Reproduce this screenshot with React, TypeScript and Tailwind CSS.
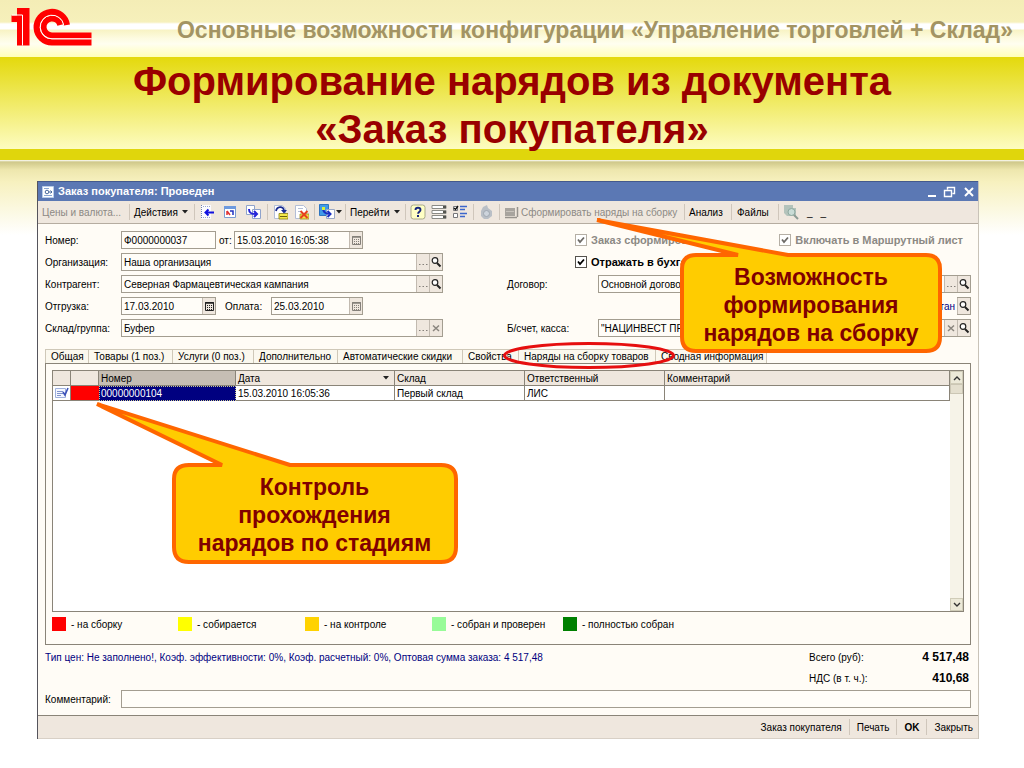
import type { ReactNode } from "react"
import clsx from "clsx"

function Logo() {
  return (
    <svg viewBox="10 6 84 42" className="w-[84px] h-[42px]" aria-label="1С" fill="none">
      <path d="M17 8H29.5V45.5H17V22H11.5V15.5H17Z" fill="#f00" />
      <path d="M12 15H22.5V45.5" stroke="#fff" strokeWidth="1" />
      <path d="M66.9 25A15.2 15.2 0 1 0 52 42.3H91.5" stroke="#f00" strokeWidth="6.2" />
      <path d="M60.3 25A8.5 8.5 0 1 0 52 35.4H91.5" stroke="#f00" strokeWidth="6" />
      <path d="M63.7 25A11.8 11.8 0 1 0 52 38.8H91.5" stroke="#fff" strokeWidth="1" />
    </svg>
  )
}

function Icon({ children }: { children: ReactNode }) {
  return (
    <svg viewBox="0 0 16 16" className="size-4 shrink-0" fill="none" aria-hidden="true">
      {children}
    </svg>
  )
}

function DocIcon() {
  return (
    <svg viewBox="0 0 12 12" className="size-3" fill="none" aria-hidden="true">
      <path d="M.5 .5H11.500V11.500H.5Z" fill="#fff" stroke="#b9cdea" />
      <path d="M2 2.500h5M2 9.500h8" stroke="#8aa6d2" />
      <circle cx="5" cy="6" r="1.800" stroke="#4a6a9c" />
      <path d="M7 6h3M8.500 4.500L10 6L8.500 7.500" stroke="#4a6a9c" />
    </svg>
  )
}

const page = <path d="M2.5 1.5H10.5L13.5 4.5V14.5H2.5Z" fill="#fff" stroke="#b3bed6" />

function AddIcon() {
  return (
    <Icon>
      <path d="M2 1H12V15H2Z" fill="#fbfbff" />
      <path d="M2.5 1v14" stroke="#6f7fb0" strokeDasharray="1 1" />
      <path d="M4 2.5h8M4 13.5h8" stroke="#9aa6c8" strokeDasharray="1 1" />
      <path d="M7 8.5H15M9.5 5.5L6.5 8.5L9.5 11.5" stroke="#1010e0" strokeWidth="2" />
    </Icon>
  )
}

function RefreshIcon() {
  return (
    <Icon>
      <path d="M2.5 2.5h11v11h-11z" fill="#fff" stroke="#7a9bd0" />
      <path d="M2 2h12v3H2z" fill="#6f9ade" />
      <path d="M5 11V7M5 7l3 4" stroke="#e03030" strokeWidth="1.5" />
      <path d="M8 7h3v4" stroke="#2030c0" strokeWidth="1.5" />
    </Icon>
  )
}

function CopyIcon() {
  return (
    <Icon>
      <path d="M1.5 1.5h8v9h-8z" fill="#fff" stroke="#8fa3cc" />
      <path d="M7.5 5.5h8v9h-8z" fill="#fff" stroke="#8fa3cc" />
      <path d="M4 5c0 4 2 5 7 5M9 7l3 3-3 3" stroke="#2424d8" strokeWidth="2" />
    </Icon>
  )
}

function PostIcon() {
  return (
    <Icon>
      {page}
      <path d="M7 9.5h9V15H7z" fill="#f5e94a" stroke="#8a7d10" strokeWidth=".8" />
      <path d="M8 12.5h7" stroke="#6c6210" />
      <path d="M4 7C5 2 11 2 12 6" stroke="#1a2a90" strokeWidth="1.8" />
      <path d="M9 6h6l-3 3.500z" fill="#1a2a90" />
    </Icon>
  )
}

function UnpostIcon() {
  return (
    <Icon>
      {page}
      <path d="M5 4.5h5M5 7.5h4" stroke="#b3bed6" />
      <path d="M7 10h9v5H7z" fill="#f5e04a" stroke="#9a8d20" strokeWidth=".8" />
      <path d="M7.5 7l7 7M14.5 7l-7 7" stroke="#e8401c" strokeWidth="2" />
    </Icon>
  )
}

function EnterBasedIcon() {
  return (
    <Icon>
      <path d="M.5.5h9v11h-9z" fill="#3f9be8" stroke="#2e75c0" />
      <path d="M7.5 5.5h8v9h-8z" fill="#fff" stroke="#9aa9c6" />
      <path d="M4 4c0 4 2 6 7 6M8.5 7l3 3-3 3" stroke="#1a2fc0" strokeWidth="2" />
      <path d="M3 3h3v3H3z" fill="#d8f03c" />
    </Icon>
  )
}

function HelpIcon() {
  return (
    <Icon>
      <rect x="1" y="1" width="14" height="14" rx="2.5" fill="#ffffc4" stroke="#a9a98c" />
      <path d="M5.5 6c0-3 5-3 5 0 0 1.8-2.4 1.7-2.4 3.800" stroke="#16247e" strokeWidth="1.9" />
      <path d="M7 11h2v2H7z" fill="#16247e" />
    </Icon>
  )
}

function ListIcon() {
  return (
    <Icon>
      <path d="M1 1.5h14v3H1zM1 6.5h14v3H1zM1 11.5h14v3H1z" fill="#fff" stroke="#8b8b86" />
      <path d="M12 2h3v2h-3zM12 7h3v2h-3zM12 12h3v2h-3z" fill="#55554f" />
    </Icon>
  )
}

function ChecksIcon() {
  return (
    <Icon>
      <path d="M1.5 2.5h4v4h-4zM1.5 9.5h4v4h-4z" fill="#fff" stroke="#77777a" />
      <path d="M2 4l1.5 1.500L6 2" stroke="#111" strokeWidth="1.4" />
      <path d="M8 2.500h7M8 5.500h5M8 9.500h7M8 12.500h5" stroke="#3c66cc" strokeWidth="1.5" />
    </Icon>
  )
}

function ClockIcon() {
  return (
    <Icon>
      <path d="M5 3l4-2 1 3 4 3v5l-4 3H6l-3-3V7z" fill="#b9bfc6" />
      <circle cx="8.500" cy="9.500" r="3" fill="#cdd4dc" stroke="#9fa7b0" />
    </Icon>
  )
}

function OrderIcon() {
  return (
    <Icon>
      <path d="M1 4h10v8H1z" fill="#a8a49e" />
      <path d="M1 13.500h12M13.500 3v10" stroke="#97938d" strokeWidth="1.500" />
      <path d="M2 7.500h8" stroke="#c8c3bc" />
    </Icon>
  )
}

function SearchDocIcon() {
  return (
    <Icon>
      <path d="M1 1h9v3h3v8H4L1 9z" fill="#b4c3bb" />
      <circle cx="8.5" cy="8" r="3.5" fill="#c9dcd6" stroke="#8fa9a0" />
      <path d="M11 11l4 4" stroke="#8c9b94" strokeWidth="2" />
    </Icon>
  )
}

function Caret() {
  return (
    <svg viewBox="0 0 6 4" className="w-[6px] h-1 shrink-0" aria-hidden="true">
      <path d="M0 0h6L3 3.500z" fill="#222" />
    </svg>
  )
}

function Separator() {
  return <span className="w-px h-4 shrink-0 bg-[#cfc6bb]" />
}

function ToolGroup({ width, children }: { width: string; children: ReactNode }) {
  return <div className={clsx("flex items-center shrink-0 h-full", width)}>{children}</div>
}

function Toolbar() {
  return (
    <div className="flex items-center h-[23px] bg-[#efe7de] border-b border-[#b5aca0] overflow-hidden whitespace-nowrap">
      <ToolGroup width="w-[91px] pl-1">
        <button className="text-[#8c8984]" disabled>Цены и валюта...</button>
      </ToolGroup>
      <Separator />
      <ToolGroup width="w-16 pl-1">
        <button className="flex items-center gap-1">Действия <Caret /></button>
      </ToolGroup>
      <Separator />
      <ToolGroup width="w-[72px] pl-1 gap-[7px]">
        <button aria-label="Добавить"><AddIcon /></button>
        <button aria-label="Обновить"><RefreshIcon /></button>
        <button aria-label="Скопировать"><CopyIcon /></button>
      </ToolGroup>
      <Separator />
      <ToolGroup width="w-[46px] pl-1 gap-[5px]">
        <button aria-label="Провести"><PostIcon /></button>
        <button aria-label="Отмена проведения"><UnpostIcon /></button>
      </ToolGroup>
      <Separator />
      <ToolGroup width="w-[30px] pl-1">
        <button className="flex items-center gap-px" aria-label="Ввести на основании"><EnterBasedIcon /><Caret /></button>
      </ToolGroup>
      <Separator />
      <ToolGroup width="w-[59px] pl-1">
        <button className="flex items-center gap-1">Перейти <Caret /></button>
      </ToolGroup>
      <Separator />
      <ToolGroup width="w-[67px] pl-1 gap-[5px]">
        <button aria-label="Справка"><HelpIcon /></button>
        <button aria-label="Список"><ListIcon /></button>
        <button aria-label="Настройка"><ChecksIcon /></button>
      </ToolGroup>
      <Separator />
      <ToolGroup width="w-[25px] pl-1">
        <button aria-label="История" disabled><ClockIcon /></button>
      </ToolGroup>
      <Separator />
      <ToolGroup width="w-[184px] pl-1">
        <button className="flex items-center gap-px text-[#8c8984]" disabled><OrderIcon /> Сформировать наряды на сборку</button>
      </ToolGroup>
      <Separator />
      <ToolGroup width="w-[46px] pl-1"><button>Анализ</button></ToolGroup>
      <Separator />
      <ToolGroup width="w-[46px] pl-[5px]"><button>Файлы</button></ToolGroup>
      <Separator />
      <ToolGroup width="w-16 pl-1 gap-2">
        <button aria-label="Найти" disabled><SearchDocIcon /></button>
        <span>_</span>
        <span>_</span>
      </ToolGroup>
    </div>
  )
}

type Action = "dots" | "search" | "clear" | "calendar" | "calendarOff"

const actionLabels: Record<Action, string> = {
  dots: "Выбрать",
  search: "Открыть",
  clear: "Очистить",
  calendar: "Календарь",
  calendarOff: "Календарь",
}

function ActionButton({ action }: { action: Action }) {
  return (
    <button
      aria-label={actionLabels[action]}
      className="flex items-center justify-center w-[13px] h-4 shrink-0 bg-[#efe7de] border-l border-[#c2bab0]"
    >
      <svg viewBox="0 0 12 16" className="w-3 h-4" fill="none" aria-hidden="true">
        {action === "dots" && <path d="M2 10.500h1.500M5.500 10.500H7M9 10.500h1.500" stroke="#85807a" />}
        {action === "clear" && <path d="M3 5.500l6 5.500M9 5.500L3 11" stroke="#8a857e" strokeWidth="1.5" />}
        {action === "search" && (
          <>
            <circle cx="5" cy="6.500" r="2.800" fill="#fff" stroke="#222" strokeWidth="1.2" />
            <path d="M7 9l3.500 3.500" stroke="#222" strokeWidth="2" />
          </>
        )}
        {(action === "calendar" || action === "calendarOff") && (
          <g stroke={action === "calendar" ? "#222" : "#85807a"}>
            <path d="M2.5 4.5h8v8h-8z" />
            <path d="M2 5h9" strokeWidth="1.5" />
            <path d="M4 7.5h6M4 9.5h6M4 11.5h6" strokeDasharray="1 1" />
          </g>
        )}
      </svg>
    </button>
  )
}

type FieldProps = { id: string; value: string; width: string; actions?: Action[] }

function Field({ id, value, width, actions = [] }: FieldProps) {
  return (
    <div className={clsx("flex items-center h-[18px] border border-[#a39d90] bg-[#fffdf8]", width)}>
      <input id={id} defaultValue={value} className="flex-1 min-w-0 h-4 px-[2px] outline-none" />
      {actions.map((action) => (
        <ActionButton key={action} action={action} />
      ))}
    </div>
  )
}

function Check({ label, muted }: { label: string; muted?: boolean }) {
  return (
    <label className={clsx("flex items-center gap-1 text-[11px] font-bold whitespace-nowrap", muted && "text-[#8c8984]")}>
      <span className="grid size-3 shrink-0">
        <input
          type="checkbox"
          defaultChecked
          disabled={muted}
          className={clsx("appearance-none size-3 border bg-white col-start-1 row-start-1", muted ? "border-[#b5afa5]" : "border-[#55524d]")}
        />
        <svg viewBox="0 0 12 12" className="size-3 col-start-1 row-start-1 pointer-events-none" fill="none">
          <path d="M3 5.5L5 8L9 3.5" stroke={muted ? "#6d6a66" : "#000"} strokeWidth="1.8" />
        </svg>
      </span>
      {label}
    </label>
  )
}

function OrderForm() {
  return (
    <div className="grid grid-cols-[398px_1fr] gap-x-16">
      <div className="grid auto-rows-[18px] gap-1">
        <div className="flex items-center">
          <label htmlFor="number" className="w-[76px]">Номер:</label>
          <Field id="number" value="Ф0000000037" width="w-[95px]" />
          <label htmlFor="date" className="w-[18px] pl-[3px]">от:</label>
          <Field id="date" value="15.03.2010 16:05:38" width="w-[129px]" actions={["calendarOff"]} />
        </div>
        <div className="flex items-center">
          <label htmlFor="org" className="w-[76px]">Организация:</label>
          <Field id="org" value="Наша организация" width="flex-1" actions={["dots", "search"]} />
        </div>
        <div className="flex items-center">
          <label htmlFor="client" className="w-[76px]">Контрагент:</label>
          <Field id="client" value="Северная Фармацевтическая кампания" width="flex-1" actions={["dots", "search"]} />
        </div>
        <div className="flex items-center">
          <label htmlFor="ship" className="w-[76px]">Отгрузка:</label>
          <Field id="ship" value="17.03.2010" width="w-[95px]" actions={["calendar"]} />
          <label htmlFor="pay" className="w-[55px] pl-[9px]">Оплата:</label>
          <Field id="pay" value="25.03.2010" width="w-[92px]" actions={["calendarOff"]} />
        </div>
        <div className="flex items-center">
          <label htmlFor="stock" className="w-[76px]">Склад/группа:</label>
          <Field id="stock" value="Буфер" width="flex-1" actions={["dots", "clear"]} />
        </div>
      </div>
      <div className="grid auto-rows-[18px] gap-1">
        <div className="flex items-center pl-[68px] pr-2 justify-between">
          <Check label="Заказ сформирован" muted />
          <Check label="Включать в Маршрутный лист" muted />
        </div>
        <div className="flex items-center pl-[68px]">
          <Check label="Отражать в бухгалтерии" />
        </div>
        <div className="flex items-center">
          <label htmlFor="contract" className="w-[91px]">Договор:</label>
          <Field id="contract" value="Основной договор" width="flex-1" actions={["dots", "search"]} />
        </div>
        <div className="flex items-center justify-end gap-[2px] text-[#000080]">
          <span>рассчитан</span>
          <span className="flex border border-l-0 border-[#a39d90]"><ActionButton action="search" /></span>
        </div>
        <div className="flex items-center">
          <label htmlFor="account" className="w-[91px]">Б/счет, касса:</label>
          <Field id="account" value={'"НАЦИНВЕСТ ПРОМБАНК"'} width="flex-1" actions={["clear", "search"]} />
        </div>
      </div>
    </div>
  )
}

const tabs = [
  { title: "Общая", width: "w-[43px]" },
  { title: "Товары (1 поз.)", width: "w-[84px]" },
  { title: "Услуги (0 поз.)", width: "w-[81px]" },
  { title: "Дополнительно", width: "w-[84px]" },
  { title: "Автоматические скидки", width: "w-[125px]" },
  { title: "Свойства", width: "w-[56px]" },
  { title: "Наряды на сборку товаров", width: "w-[137px]" },
  { title: "Сводная информация", width: "w-[111px]" },
]

const legend = [
  { color: "bg-[#ff0000]", text: "- на сборку" },
  { color: "bg-[#ffff00]", text: "- собирается" },
  { color: "bg-[#ffd200]", text: "- на контроле" },
  { color: "bg-[#98fb98]", text: "- собран и проверен" },
  { color: "bg-[#008000]", text: "- полностью собран" },
]

function TaskTable() {
  const head = "border-r border-b border-[#8a8478] pl-[2px] font-normal text-left"
  const cell = "border-r border-b border-[#8a8478] pl-[2px]"
  return (
    <div className="flex h-[242px] border border-[#8a8478] bg-white">
      <div className="flex-1">
        <table className="w-full table-fixed border-separate border-spacing-0">
          <colgroup>
            <col className="w-[18px]" />
            <col className="w-7" />
            <col className="w-[137px]" />
            <col className="w-[159px]" />
            <col className="w-[130px]" />
            <col className="w-[140px]" />
            <col />
          </colgroup>
          <thead>
            <tr className="h-[15px] bg-[#efe7de]">
              <th className={head} />
              <th className={head} />
              <th className={clsx(head, "bg-[#c6beb4]")}>Номер</th>
              <th className={head}>
                <span className="flex items-center justify-between pr-[5px]">Дата <Caret /></span>
              </th>
              <th className={head}>Склад</th>
              <th className={head}>Ответственный</th>
              <th className={head}>Комментарий</th>
            </tr>
          </thead>
          <tbody>
            <tr className="h-[15px]">
              <td className={cell}>
                <svg viewBox="0 0 14 12" className="w-[14px] h-3" fill="none" aria-hidden="true">
                  <path d="M.5 1.5h10v9H.5z" fill="#f4f7ff" stroke="#9fb0dc" />
                  <path d="M2 4.5h6M2 6.5h6M2 8.5h4" stroke="#7f92cc" />
                  <path d="M8 5l2 3 3-7" stroke="#3a50b8" strokeWidth="1.6" />
                </svg>
              </td>
              <td className="bg-[#ff0000] border-b border-[#8a8478]" />
              <td className="bg-[#000080] text-white border border-dotted border-[#c8c890] pl-px">00000000104</td>
              <td className={cell}>15.03.2010 16:05:36</td>
              <td className={cell}>Первый склад</td>
              <td className={cell}>ЛИС</td>
              <td className={cell} />
            </tr>
          </tbody>
        </table>
      </div>
      <div className="flex flex-col justify-between w-[13px] bg-[#f6f3e8]">
        <div>
          <button aria-label="Вверх" className="grid place-items-center w-full h-[13px] bg-[#ece9d8] border border-[#d0ccb8]">
            <svg viewBox="0 0 8 6" className="w-2 h-[6px]" fill="none"><path d="M1 5l3-3 3 3" stroke="#333" strokeWidth="1.4" /></svg>
          </button>
          <div className="h-[10px] bg-[#e4dfce] border border-[#cbc6b4]" />
        </div>
        <button aria-label="Вниз" className="grid place-items-center w-full h-[13px] bg-[#ece9d8] border border-[#d0ccb8]">
          <svg viewBox="0 0 8 6" className="w-2 h-[6px]" fill="none"><path d="M1 1l3 3 3-3" stroke="#333" strokeWidth="1.4" /></svg>
        </button>
      </div>
    </div>
  )
}

function OrderWindow() {
  return (
    <section className="ml-[37px] mr-[45px] border-l border-[#55545c] border-r-[#c9c3b8] border-r bg-[#fffcf6] text-[10px] leading-[13px] text-black">
      <header className="flex items-center h-5 px-1 gap-1 bg-[#5b78b4] border-t border-[#44598c] text-white">
        <DocIcon />
        <h2 className="flex-1 text-[11px] font-bold">Заказ покупателя: Проведен</h2>
        <svg viewBox="0 0 48 12" className="w-12 h-3" fill="none" stroke="#fff" aria-hidden="true">
          <path d="M2 10h8" strokeWidth="2" />
          <path d="M21.5 3.5V1.5h7v6h-2M18.500 4.500h7v6h-7z" strokeWidth="1.4" />
          <path d="M39 2l8 8M47 2l-8 8" strokeWidth="2" />
        </svg>
      </header>
      <Toolbar />
      <div className="p-[7px]">
        <OrderForm />
        <div className="flex mt-3 h-[14px] border-l border-[#cfc8b8]" role="tablist">
          {tabs.map((tab) => (
            <button
              key={tab.title}
              role="tab"
              className={clsx("shrink-0 px-[5px] text-left whitespace-nowrap bg-[#fbf8ee] border-t border-r border-[#cfc8b8]", tab.width)}
            >
              {tab.title}
            </button>
          ))}
        </div>
        <div className="border border-[#8a8478] h-[282px] px-[6px] pt-[6px]">
          <TaskTable />
          <ul className="grid grid-cols-[126px_127px_127px_131px_1fr] mt-[5px]">
            {legend.map((item) => (
              <li key={item.text} className="flex items-center gap-[5px]">
                <span className={clsx("size-[14px]", item.color)} />
                {item.text}
              </li>
            ))}
          </ul>
        </div>
        <div className="flex justify-between pt-[6px]">
          <p className="text-[#000080]">
            Тип цен: Не заполнено!, Коэф. эффективности: 0%, Коэф. расчетный: 0%, Оптовая сумма заказа: 4 517,48
          </p>
          <dl className="grid grid-cols-[1fr_auto] gap-y-2 w-[162px] pr-[2px]">
            <dt>Всего (руб):</dt>
            <dd className="text-[12px] font-bold text-right">4 517,48</dd>
            <dt>НДС (в т. ч.):</dt>
            <dd className="text-[12px] font-bold text-right">410,68</dd>
          </dl>
        </div>
        <div className="flex items-center mt-[5px]">
          <label htmlFor="comment" className="w-[76px]">Комментарий:</label>
          <Field id="comment" value="" width="flex-1" />
        </div>
      </div>
      <footer className="flex items-center justify-end h-6 pr-[5px] gap-[7px] bg-[#efe7de] border-t border-[#8a8478] border-b border-b-[#d8d0c6]">
        <button>Заказ покупателя</button>
        <Separator />
        <button>Печать</button>
        <Separator />
        <button className="font-bold">OK</button>
        <Separator />
        <button>Закрыть</button>
      </footer>
    </section>
  )
}

export default function App() {
  return (
    <main className="relative min-h-screen bg-white overflow-hidden font-['Liberation_Sans',Arial,sans-serif]">
      <div className="flex items-center justify-between h-[57px] pl-[10px] pr-[11px] bg-[linear-gradient(#f4edb6_0,#f6f0bb_22px,#fff_24px,#fff_29px,#f8f3c4_30px,#fdfbe0_38px,#fffef0_44px,#ffffb8_57px)]">
        <div className="self-start pt-[6px]"><Logo /></div>
        <p className="pt-1 text-[23px] font-bold text-[#a39463] whitespace-nowrap">
          Основные возможности конфигурации «Управление торговлей + Склад»
        </p>
      </div>
      <h1 className="h-[103px] border-b-[11px] border-[#e0d60c] bg-[linear-gradient(#e4d90c,#fdfcc0)] text-center text-[40px] leading-[48px] font-bold text-[#990000]">
        Формирование нарядов из документа
        <br />
        «Заказ покупателя»
      </h1>
      <div className="pt-[21px] bg-[linear-gradient(#fff_0,#cfc88a_2px,#eee7ae_10px,#f7f1bf_22px,#fff_75px)]">
        <OrderWindow />
      </div>

      <svg viewBox="502 340 174 30" className="absolute left-[502px] top-[340px] w-[174px] h-[30px] pointer-events-none" fill="none">
        <ellipse cx="589" cy="355.500" rx="84.500" ry="12" stroke="#e60f0f" strokeWidth="3" />
      </svg>

      <div className="absolute left-[595px] top-[217px] w-[349px] h-[138px] pt-[46px] pl-[85px]">
        <svg viewBox="595 217 349 138" className="absolute inset-0" fill="none">
          <path
            d="M597 220L738 255H696Q682 255 682 269V337Q682 351 696 351H926Q940 351 940 337V269Q940 255 926 255H788Z"
            fill="#fc0"
            stroke="#f60"
            strokeWidth="4"
            strokeLinejoin="bevel"
          />
        </svg>
        <p className="relative w-[262px] text-center text-[23px] leading-7 font-bold text-[#800000]">
          Возможность
          <br />
          формирования
          <br />
          нарядов на сборку
        </p>
      </div>

      <div className="absolute left-[95px] top-[400px] w-[364px] h-[165px] pt-[73px] pl-[77px]">
        <svg viewBox="95 400 364 165" className="absolute inset-0" fill="none">
          <path
            d="M97 404L222 465H189Q174 465 174 479V547Q174 562 189 562H441Q456 562 456 547V479Q456 465 441 465H290Z"
            fill="#fc0"
            stroke="#f60"
            strokeWidth="4"
            strokeLinejoin="bevel"
          />
        </svg>
        <p className="relative w-[285px] text-center text-[23px] leading-7 font-bold text-[#800000]">
          Контроль
          <br />
          прохождения
          <br />
          нарядов по стадиям
        </p>
      </div>
    </main>
  )
}
